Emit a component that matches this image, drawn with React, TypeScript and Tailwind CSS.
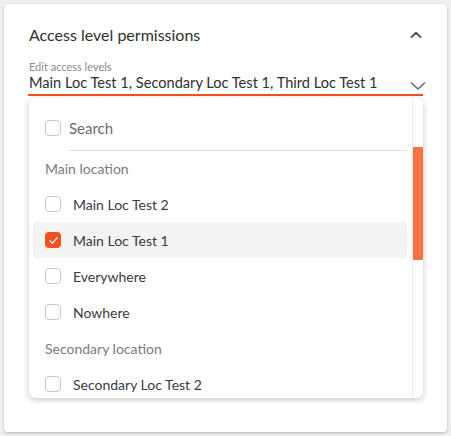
import React from 'react';

const Box = ({ checked }: { checked?: boolean }) =>
  checked ? (
    <span className="w-4 h-4 rounded-[4px] bg-[#f4511e] flex items-center justify-center shrink-0">
      <svg width="11" height="11" viewBox="0 0 12 12" fill="none">
        <path d="M2 6.2 L4.8 9 L10 3" stroke="white" strokeWidth="1.3" strokeLinecap="round" strokeLinejoin="round" />
      </svg>
    </span>
  ) : (
    <span className="w-4 h-4 rounded-[4px] border border-[#c8c8c8] bg-white shrink-0" />
  );

const rows: { kind: 'group' | 'item'; label: string; checked?: boolean }[] = [
  { kind: 'group', label: 'Main location' },
  { kind: 'item', label: 'Main Loc Test 2' },
  { kind: 'item', label: 'Main Loc Test 1', checked: true },
  { kind: 'item', label: 'Everywhere' },
  { kind: 'item', label: 'Nowhere' },
  { kind: 'group', label: 'Secondary location' },
  { kind: 'item', label: 'Secondary Loc Test 2' },
];

export default function App() {
  return (
    <div className="w-[451px] h-[436px] bg-[#f0f0f0] p-1 text-[#333]" style={{ fontFamily: 'Lato, "Noto Sans", sans-serif' }}>
      <div className="h-[428px] bg-white rounded-[4px] shadow-[0_1px_3px_rgba(0,0,0,0.25)] px-6 pt-[19px]">
        <div className="flex items-center justify-between pl-[1px] h-[24px]">
          <h2 className="text-[16px] text-[#2f2f2f]">Access level permissions</h2>
          <svg width="12" height="8" viewBox="0 0 12 8" fill="none" className="mr-[1px]">
            <path d="M1.5 6 L6 1.8 L10.5 6" stroke="#5a5a5a" strokeWidth="2" strokeLinecap="round" strokeLinejoin="round" />
          </svg>
        </div>

        <div className="mt-[14px] border-b-2 border-[#f4511e] pb-[2px]">
          <p className="text-[11px] leading-[12px] text-[#8a8a8a] pl-[1px]">Edit access levels</p>
          <div className="flex items-center justify-between pl-[1px] h-[19px]">
            <span className="text-[14.6px] leading-[19px] text-[#2f2f2f]">Main Loc Test 1, Secondary Loc Test 1, Third Loc Test 1</span>
            <svg width="16" height="10" viewBox="0 0 16 10" fill="none" className="mt-[6px] mr-[-3px]">
              <path d="M1.5 2 L8 8 L14.5 2" stroke="#6a6a6a" strokeWidth="1.6" strokeLinecap="round" strokeLinejoin="round" />
            </svg>
          </div>
        </div>

        <div className="mt-[2px] ml-[1px] w-[394px] h-[300px] bg-white rounded-[6px] shadow-[0_2px_6px_rgba(0,0,0,0.22)] flex overflow-hidden">
          <div className="flex-1 pl-[4px] pt-[12px]">
            <div className="flex items-center h-[36px] pl-[12px]">
              <Box />
              <div className="ml-[8px] flex-1 h-[36px] flex items-center border-b border-[#e2e2e2] mt-[10px] pb-[8px]">
                <span className="text-[15px] text-[#6a6a75]">Search</span>
              </div>
            </div>
            <div className="mt-[4px]">
              {rows.map((r) =>
                r.kind === 'group' ? (
                  <div key={r.label} className="h-[36px] flex items-center pl-[12px] text-[14px] text-[#7a7a85]">
                    {r.label}
                  </div>
                ) : (
                  <div
                    key={r.label}
                    className={`h-[36px] flex items-center pl-[12px] rounded-[4px] ${r.checked ? 'bg-[#f3f3f3]' : ''}`}
                  >
                    <Box checked={r.checked} />
                    <span className="ml-[12px] text-[14px] text-[#3a3a45]">{r.label}</span>
                  </div>
                ),
              )}
            </div>
          </div>
          <div className="w-[11px] ml-[5px] border-l border-[#ececec] pt-[49px]">
            <div className="w-[10px] h-[113px] bg-[#ff7043]" />
          </div>
        </div>
      </div>
    </div>
  );
}
